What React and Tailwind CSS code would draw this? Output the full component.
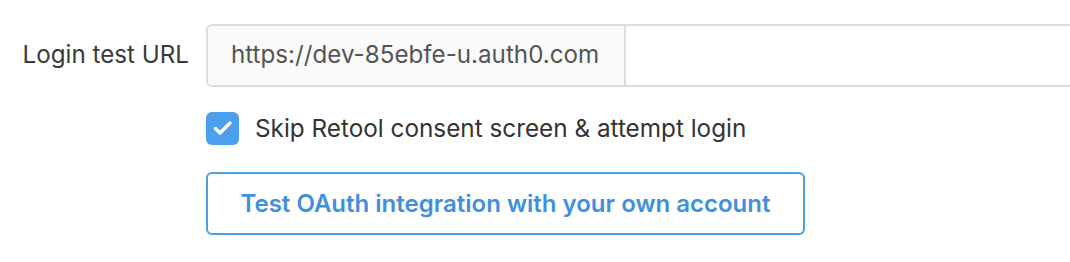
import React from "react"

const CheckIcon = () => (
  <svg width="22" height="22" viewBox="0 0 22 22" fill="none">
    <path d="M3.5 11.5l4.5 4.5 10-10" stroke="white" strokeWidth="3.4" strokeLinecap="round" strokeLinejoin="round" />
  </svg>
)

const App = () => {
  return (
    <div className="w-[1070px] h-[262px] overflow-hidden bg-white font-['Inter','Noto_Sans',sans-serif]">
      <div className="flex w-max items-center pt-[24px]">
        <div className="w-[206px] shrink-0 pr-[17px] text-right text-[24.2px] text-[#3a3a3a] leading-none">
          Login test URL
        </div>
        <div className="flex h-[63px] w-[900px] shrink-0 border-2 border-[#dcdcdc] rounded-[6px] overflow-hidden">
          <div className="flex items-center w-[418px] shrink-0 bg-[#fafafa] border-r-2 border-[#dcdcdc] pl-[23px] text-[24.2px] text-[#555]">
            https://dev-85ebfe-u.auth0.com
          </div>
          <div className="flex-1 bg-white" />
        </div>
      </div>

      <div className="pl-[206px]">
        <label className="flex items-center gap-[16px] mt-[23px]">
          <span className="flex items-center justify-center w-[33px] h-[33px] shrink-0 rounded-[6px] bg-[#4a9fef]">
            <CheckIcon />
          </span>
          <span className="text-[24.3px] text-[#333]">Skip Retool consent screen &amp; attempt login</span>
        </label>

        <button className="mt-[26px] w-[599px] h-[63px] border-2 border-[#4a9de8] rounded-[6px] bg-white text-[24px] font-semibold text-[#3f8fdf]">
          Test OAuth integration with your own account
        </button>
      </div>
    </div>
  )
}

export default App
